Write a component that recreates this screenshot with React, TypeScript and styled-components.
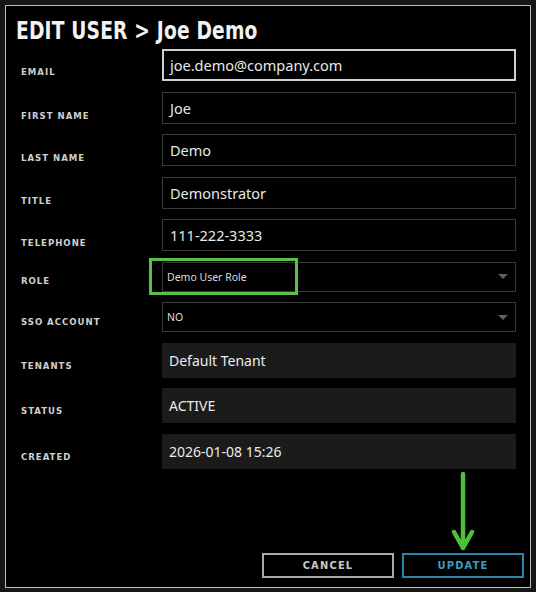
import styled, { createGlobalStyle } from 'styled-components'

const GlobalStyle = createGlobalStyle`
  html, body {
    margin: 0;
    padding: 0;
    background: #161616;
  }
  * {
    box-sizing: border-box;
  }
`

const condensed = `"DejaVu Sans Condensed", "DejaVu Sans", sans-serif`
const body = `"Noto Sans", "Open Sans", sans-serif`

const Page = styled.div`
  width: 536px;
  height: 592px;
  padding: 5px 5px 4px 5px;
  position: relative;
`

const Dialog = styled.div`
  height: 100%;
  border: 1px solid #bdbdbd;
  background: #000;
  display: flex;
  flex-direction: column;
  padding: 12px 14px 9px 10px;
`

const Title = styled.h1`
  margin: 0;
  font-family: ${condensed};
  font-stretch: condensed;
  font-weight: 700;
  font-size: 25px;
  line-height: 26px;
  color: #f2f2f2;
  letter-spacing: 0.2px;
  white-space: nowrap;
  transform: scaleX(0.83);
  transform-origin: left center;
`

const Form = styled.div`
  display: grid;
  grid-template-columns: 146px 354px;
  row-gap: 10.5px;
  margin-top: 5px;
`

const Label = styled.div<{ $drop?: number }>`
  font-family: ${condensed};
  font-stretch: condensed;
  font-weight: 700;
  font-size: 9.5px;
  letter-spacing: 1px;
  color: #cfcfcf;
  padding-left: 5px;
  padding-top: ${(p) => p.$drop ?? 18}px;
`

const TextField = styled.div<{ $focused?: boolean }>`
  height: 32px;
  border: ${(p) => (p.$focused ? '2px solid #cfcfcf' : '1px solid #3a3a3a')};
  background: #000;
  color: #e8e8e8;
  font-family: ${body};
  font-size: 14.5px;
  display: flex;
  align-items: center;
  padding-left: ${(p) => (p.$focused ? 6 : 7)}px;
`

const SelectField = styled.div`
  height: 30px;
  border: 1px solid #3a3a3a;
  background: #000;
  color: #dcdcdc;
  font-family: ${body};
  font-size: 10.5px;
  display: flex;
  align-items: center;
  justify-content: space-between;
  padding: 0 7px 0 4px;
`

const Caret = styled.span`
  width: 0;
  height: 0;
  border-left: 5px solid transparent;
  border-right: 5px solid transparent;
  border-top: 5px solid #5e5e5e;
`

const ReadOnly = styled.div`
  height: 35px;
  background: #1b1b1b;
  color: #ececec;
  font-family: ${body};
  font-size: 14px;
  display: flex;
  align-items: center;
  padding-left: 7px;
`

const RoleWrap = styled.div`
  position: relative;
`

const Highlight = styled.div`
  position: absolute;
  left: -13px;
  top: -4px;
  width: 149px;
  height: 37px;
  border: 3px solid #5dbf4b;
  pointer-events: none;
`

const Footer = styled.div`
  margin-top: auto;
  display: flex;
  justify-content: flex-end;
  gap: 8px;
  margin-right: -8px;
`

const Button = styled.button<{ $primary?: boolean }>`
  height: 25px;
  width: ${(p) => (p.$primary ? 122 : 132)}px;
  background: #000;
  border: 2px solid ${(p) => (p.$primary ? '#2b86a6' : '#a9a9a9')};
  color: ${(p) => (p.$primary ? '#3a9ec2' : '#c8c8c8')};
  font-family: ${condensed};
  font-stretch: condensed;
  font-weight: 700;
  font-size: 11px;
  letter-spacing: 1.2px;
  padding: 0;
  cursor: pointer;
`

const Arrow = styled.svg`
  position: absolute;
  left: 450px;
  top: 468px;
  width: 28px;
  height: 88px;
`

function RoleSelect() {
  return (
    <RoleWrap>
      <SelectField>
        <span>Demo User Role</span>
        <Caret />
      </SelectField>
      <Highlight />
    </RoleWrap>
  )
}

export default function App() {
  return (
    <Page>
      <GlobalStyle />
      <Dialog>
        <Title>EDIT USER &gt; Joe Demo</Title>
        <Form>
          <Label $drop={17}>EMAIL</Label>
          <TextField $focused>joe.demo@company.com</TextField>
          <Label>FIRST NAME</Label>
          <TextField>Joe</TextField>
          <Label>LAST NAME</Label>
          <TextField>Demo</TextField>
          <Label>TITLE</Label>
          <TextField>Demonstrator</TextField>
          <Label>TELEPHONE</Label>
          <TextField>111-222-3333</TextField>
          <Label $drop={13}>ROLE</Label>
          <RoleSelect />
          <Label $drop={14}>SSO ACCOUNT</Label>
          <SelectField>
            <span>NO</span>
            <Caret />
          </SelectField>
          <Label $drop={17}>TENANTS</Label>
          <ReadOnly>Default Tenant</ReadOnly>
          <Label $drop={17}>STATUS</Label>
          <ReadOnly>ACTIVE</ReadOnly>
          <Label $drop={17}>CREATED</Label>
          <ReadOnly>2026-01-08 15:26</ReadOnly>
        </Form>
        <Footer>
          <Button>CANCEL</Button>
          <Button $primary>UPDATE</Button>
        </Footer>
      </Dialog>
      <Arrow viewBox="0 0 28 88">
        <path
          d="M13 6 L13 80 M4 64 L13 80 L22 64"
          fill="none"
          stroke="#4fbf3a"
          strokeWidth="4.5"
          strokeLinecap="round"
          strokeLinejoin="round"
        />
      </Arrow>
    </Page>
  )
}
